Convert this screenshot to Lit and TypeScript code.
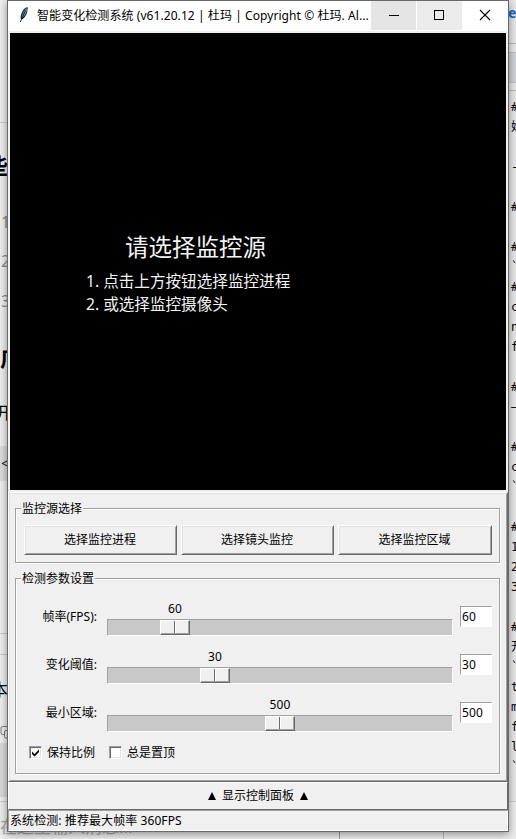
import { LitElement, html, css } from "lit";
import { customElement } from "lit/decorators.js";

const FONT = css`"Noto Sans", "Noto Sans CJK SC", sans-serif`;

interface Scale {
  label: string;
  value: number;
  offset: number;
}

const SCALES: Scale[] = [
  { label: "帧率(FPS):", value: 60, offset: 52 },
  { label: "变化阈值:", value: 30, offset: 92 },
  { label: "最小区域:", value: 500, offset: 157 },
];

// Visible first column of the editor behind the window, one entry per line.
const EDITOR = [
  "#", "妨", "", "-", "", "#", "", "#", "`", "#", "c", "n", "f", "", "#", "—", "",
  "#", "c", "`", "", "#", "1", "2", "3", "", "#", "开", "`", "t", "m", "f", "l", "`", "", "-",
];

// Visible last column of the document behind the window.
const DOC: { text: string; h: number; cls: string }[] = [
  { text: "", h: 123, cls: "rule" },
  { text: "些", h: 83, cls: "head" },
  { text: "1", h: 31, cls: "num" },
  { text: "2", h: 48, cls: "num" },
  { text: "3", h: 31, cls: "num" },
  { text: "广", h: 82, cls: "head lead" },
  { text: "开", h: 30, cls: "body cut" },
  { text: "", h: 18, cls: "" },
  { text: "<", h: 35, cls: "code" },
  { text: "", h: 153, cls: "rule" },
  { text: "", h: 21, cls: "rule" },
  { text: "本", h: 70, cls: "body" },
];

@customElement("win-scale")
class WinScale extends LitElement {
  static properties = {
    label: { type: String },
    value: { type: Number },
    offset: { type: Number },
  };
  declare label: string;
  declare value: number;
  declare offset: number;

  static styles = css`
    :host {
      display: grid;
      grid-template-columns: 80px 346px 32px;
      height: 48px;
      align-items: start;
    }
    .label {
      text-align: right;
      line-height: 16px;
      padding-top: 9px;
      width: 80px;
      white-space: nowrap;
    }
    .scale {
      margin-left: 10px;
      width: 346px;
    }
    .value {
      width: 30px;
      text-align: center;
      line-height: 18px;
      height: 18px;
      letter-spacing: 0.1px;
    }
    .trough {
      box-sizing: border-box;
      height: 17px;
      margin-top: 1px;
      border: 1px solid #a0a0a0;
      border-right-color: #fff;
      border-bottom-color: #fff;
      background: #c8c8c8;
    }
    .thumb {
      box-sizing: border-box;
      width: 30px;
      height: 15px;
      display: flex;
      border: 1px solid #fff;
      border-right-color: #696969;
      border-bottom-color: #696969;
      background: #f0f0f0;
      box-shadow: inset -1px -1px #a0a0a0;
    }
    .grip {
      width: 13px;
      height: 12px;
      border-right: 1px solid #696969;
      box-shadow: 1px 0 #fff;
    }
    .entry {
      box-sizing: border-box;
      width: 32px;
      height: 21px;
      margin-left: 17px;
      margin-top: 6px;
      padding-left: 1px;
      border: 1px solid #a0a0a0;
      border-right-color: #fff;
      border-bottom-color: #fff;
      background: #fff;
      line-height: 20px;
      letter-spacing: 0.1px;
    }
  `;

  render() {
    return html`
      <div class="label">${this.label}</div>
      <div class="scale">
        <div class="value" style="margin-left:${this.offset + 1}px">${this.value}</div>
        <div class="trough">
          <div class="thumb" style="margin-left:${this.offset}px"><div class="grip"></div></div>
        </div>
      </div>
      <div class="entry">${this.value}</div>
    `;
  }
}

@customElement("app-root")
export class AppRoot extends LitElement {
  static styles = css`
    :host {
      display: block;
      position: relative;
      width: 516px;
      height: 839px;
      overflow: hidden;
      background: #ebebeb;
      color: #000;
      font: 12px/16px ${FONT};
    }
    .backdrop {
      display: flex;
      justify-content: space-between;
      height: 839px;
    }
    .doc {
      width: 8px;
      height: 839px;
      overflow: hidden;
      background: #eee;
    }
    .row {
      box-sizing: border-box;
      display: flex;
      align-items: center;
      justify-content: flex-end;
      width: 8px;
    }
    .rule { border-bottom: 1px solid #ccc; }
    .head { font-size: 22px; font-weight: 700; }
    .lead { justify-content: flex-start; }
    .num { font-size: 16px; color: #8c8c8c; justify-content: flex-start; padding-left: 1px; }
    .body { font-size: 17px; }
    .cut { width: 12px; }
    .code { background: #dcdcdc; font-size: 12px; }
    .copy { height: 16px; display: block; }
    .block { height: 54px; background: #dadada; margin-top: 2px; }
    .editor {
      box-sizing: border-box;
      width: 8px;
      height: 839px;
      overflow: hidden;
      background: #e8e8e8;
      font: 12px/20px "DejaVu Sans Mono", "Noto Sans CJK SC", monospace;
    }
    .tab {
      height: 43px;
      line-height: 25px;
      font-family: "Noto Sans", sans-serif;
      font-weight: 700;
      font-size: 14px;
      color: #1764c0;
      border-bottom: 1px solid #b8b8b8;
    }
    .tool {
      height: 29px;
      margin-top: 8px;
      background: #d0d2d5;
      border: solid #c0c0c0;
      border-width: 1px 0;
    }
    .lines {
      margin-top: 7px;
      border-top: 1px solid #bbb;
      padding: 6px 0 0 3px;
      width: 20px;
    }
    .line { height: 20px; white-space: nowrap; }
    .footer {
      position: absolute;
      left: 0;
      top: 801px;
      width: 516px;
      height: 38px;
      display: flex;
      background: #ececec;
      border-top: 1px solid #ccc;
      box-sizing: border-box;
    }
    .hint {
      width: 340px;
      font-size: 17px;
      line-height: 50px;
      color: #a8a8a8;
      border-right: 1px solid #999;
      box-sizing: border-box;
      white-space: nowrap;
      overflow: hidden;
    }
    .pane { width: 103px; border-right: 1px solid #bbb; }
    .window {
      position: absolute;
      left: 7px;
      top: 0;
      box-sizing: border-box;
      width: 502px;
      height: 832px;
      display: flex;
      flex-direction: column;
      border: 1px solid #696969;
      background: #f0f0f0;
      box-shadow: 0 2px 8px rgba(0, 0, 0, 0.42);
    }
    .titlebar {
      display: flex;
      height: 30px;
      background: #fff;
      flex: none;
    }
    .feather { width: 13px; height: 18px; margin: 5px 7px 0 9px; flex: none; }
    .title {
      width: 334px;
      line-height: 30px;
      white-space: nowrap;
      letter-spacing: 0.07px;
      flex: none;
    }
    .ctl { width: 45px; height: 29px; margin-right: 1px; flex: none; }
    .ctl svg { display: block; }
    .min { background: #e5e5e5; }
    .max { background: #ebebeb; }
    .video {
      box-sizing: border-box;
      width: 496px;
      height: 457px;
      margin: 2px 2px 2px;
      padding: 197px 0 0 76px;
      background: #000;
      color: #f4f4f4;
      flex: none;
    }
    .prompt { font-size: 23.5px; line-height: 34px; margin-left: 39px; }
    .step { font-size: 15.6px; line-height: 23px; white-space: nowrap; }
    .first { margin-top: 5px; line-height: 24px; }
    .panel {
      box-sizing: border-box;
      height: 290px;
      padding: 15px 5px 0 6px;
      border: 1px solid #fff;
      border-right-color: #696969;
      border-bottom-color: #696969;
      box-shadow: inset 1px 1px #e3e3e3, inset -1px -1px #a0a0a0;
      flex: none;
    }
    .group {
      box-sizing: border-box;
      width: 485px;
      border: 1px solid #a0a0a0;
      box-shadow: inset 1px 1px #fff, 1px 1px #fff;
    }
    .source { height: 55px; }
    .params { height: 196px; margin-top: 15px; }
    .legend {
      width: fit-content;
      height: 16px;
      margin: -8px 0 0 5px;
      padding: 0 1px;
      background: #f0f0f0;
      white-space: nowrap;
    }
    .buttons { display: flex; gap: 4px; margin: 8px 0 0 8px; }
    .btn {
      box-sizing: border-box;
      width: 153px;
      height: 30px;
      padding-right: 1px;
      border: 1px solid #fff;
      border-right-color: #696969;
      border-bottom-color: #696969;
      box-shadow: inset 1px 1px #e3e3e3, inset -1px -1px #a0a0a0;
      text-align: center;
      line-height: 28px;
    }
    .btn:last-child { width: 154px; }
    .scales { margin: 13px 0 0 1px; }
    .checks { display: flex; margin: 0 0 0 13px; height: 17px; align-items: center; }
    .box {
      box-sizing: border-box;
      width: 13px;
      height: 13px;
      margin-right: 5px;
      border: 1px solid #a0a0a0;
      border-right-color: #fff;
      border-bottom-color: #fff;
      box-shadow: inset 1px 1px #696969, inset -1px -1px #e3e3e3;
      background: #fff;
    }
    .box svg { display: block; }
    .check-text { width: 62px; white-space: nowrap; }
    .toggle {
      box-sizing: border-box;
      height: 28px;
      border: 1px solid #fff;
      border-right-color: #696969;
      border-bottom-color: #696969;
      display: flex;
      align-items: center;
      justify-content: center;
      gap: 5px;
      flex: none;
    }
    .status {
      box-sizing: border-box;
      height: 21px;
      padding-left: 1px;
      border: 1px solid #a0a0a0;
      border-right-color: #fff;
      border-bottom-color: #fff;
      line-height: 20px;
      letter-spacing: 0.08px;
      flex: none;
    }
  `;

  private arrow() {
    return html`<svg width="10" height="10" viewBox="0 0 10 10"><path d="M5 1 9 9H1Z" fill="#000" /></svg>`;
  }

  render() {
    return html`
      <div class="backdrop">
        <div class="doc">
          ${DOC.map(
            (d) => html`<div class="row ${d.cls}" style="height:${d.h}px">${d.text}</div>`
          )}
          <svg class="copy" width="8" height="16" viewBox="0 0 8 16" fill="none" stroke="#777">
            <path d="M8 1.5H2.5Q1 1.5 1 3v5q0 1.5 1.500 1.500H4M8 5.500H6Q4.500 5.500 4.500 7v4.500q0 1.500 1.500 1.500h2" />
          </svg>
          <div class="block"></div>
        </div>
        <div class="editor">
          <div class="tab">e</div>
          <div class="tool"></div>
          <div class="lines">${EDITOR.map((l) => html`<div class="line">${l}</div>`)}</div>
        </div>
      </div>
      <div class="footer">
        <div class="hint">在这里输入消息...</div>
        <div class="pane"></div>
      </div>

      <div class="window">
        <div class="titlebar">
          <svg class="feather" viewBox="0 0 13 18">
            <path d="M10.500 1C7 2 4 6 3.500 12L5 13.500C9 11 11 6 10.500 1Z" fill="#17212e" />
            <path d="M10 2C7 4 5 8 4.800 12 8.500 9.500 10 6 10 2Z" fill="#5a9ad8" />
            <path d="M8.500 4.500 3.200 16" stroke="#111" stroke-width="0.900" fill="none" />
          </svg>
          <div class="title">智能变化检测系统 (v61.20.12 | 杜玛 | Copyright © 杜玛. Al...</div>
          <div class="ctl min">
            <svg width="45" height="29"><path d="M18 14.500h10" stroke="#000" /></svg>
          </div>
          <div class="ctl max">
            <svg width="45" height="29"><rect x="17.500" y="9.500" width="9" height="9" fill="none" stroke="#000" /></svg>
          </div>
          <div class="ctl">
            <svg width="45" height="29"><path d="m17 9 10 10M27 9 17 19" stroke="#000" stroke-width="1.100" /></svg>
          </div>
        </div>

        <div class="video">
          <div class="prompt">请选择监控源</div>
          <div class="step first">1. 点击上方按钮选择监控进程</div>
          <div class="step">2. 或选择监控摄像头</div>
        </div>

        <div class="panel">
          <div class="group source">
            <div class="legend">监控源选择</div>
            <div class="buttons">
              ${["选择监控进程", "选择镜头监控", "选择监控区域"].map((t) => html`<div class="btn">${t}</div>`)}
            </div>
          </div>
          <div class="group params">
            <div class="legend">检测参数设置</div>
            <div class="scales">
              ${SCALES.map(
                (s) => html`<win-scale .label=${s.label} .value=${s.value} .offset=${s.offset}></win-scale>`
              )}
            </div>
            <div class="checks">
              <div class="box">
                <svg width="11" height="11" viewBox="0 0 11 11"><path d="M2 4.500 4.500 7 9 2.500V5L4.500 9.500 2 7Z" fill="#000" /></svg>
              </div>
              <div class="check-text">保持比例</div>
              <div class="box"></div>
              <div class="check-text">总是置顶</div>
            </div>
          </div>
        </div>

        <div class="toggle">${this.arrow()}<span>显示控制面板</span>${this.arrow()}</div>
        <div class="status">系统检测: 推荐最大帧率 360FPS</div>
      </div>
    `;
  }
}
